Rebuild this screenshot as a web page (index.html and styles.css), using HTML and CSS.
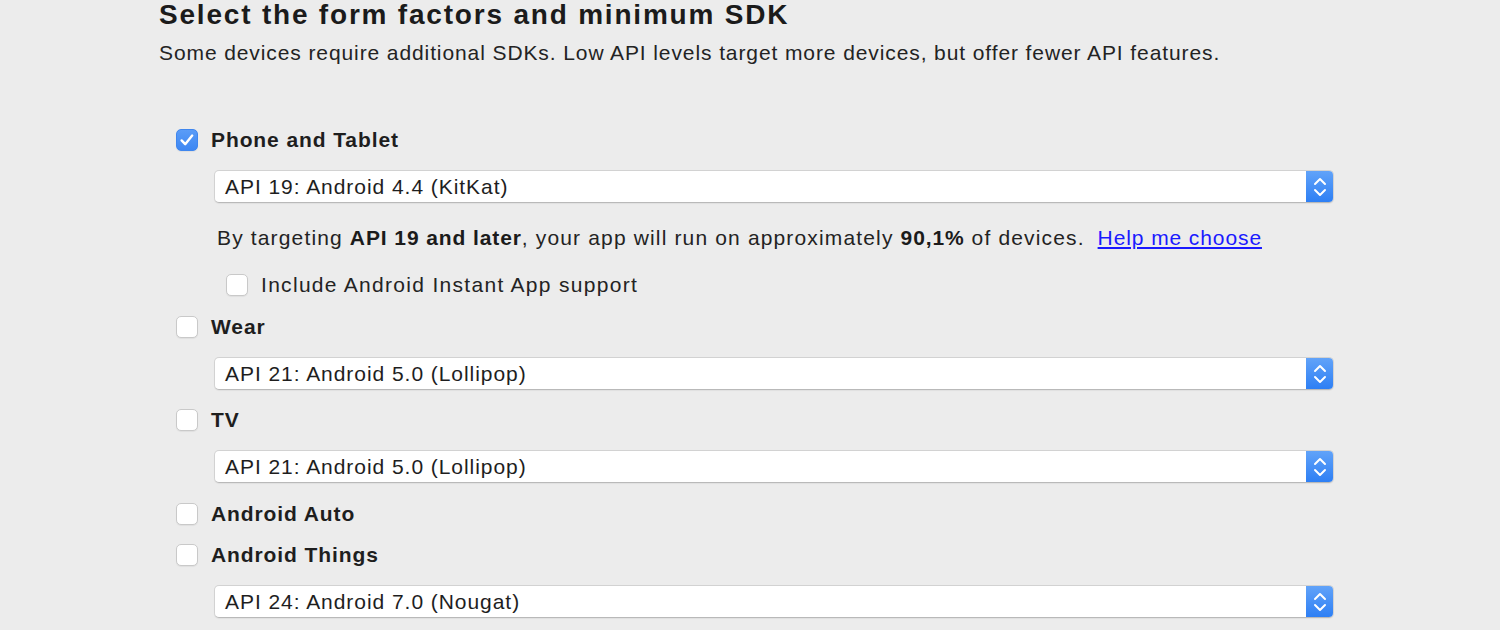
FILE: index.html
```html
<!DOCTYPE html>
<html>
<head>
<meta charset="utf-8">
<link rel="stylesheet" href="styles.css">
</head>
<body>
<div class="page">
  <h1 class="title">Select the form factors and minimum SDK</h1>
  <p class="subtitle">Some devices require additional SDKs. Low API levels target more devices, but offer fewer API features.</p>

  <div class="options">
    <label class="row row-phone">
      <span class="cb checked"><svg viewBox="0 0 20 20" width="20" height="20"><path d="M4.6 10.4l3.6 3.8L15.2 5.6" fill="none" stroke="#fff" stroke-width="2.4" stroke-linecap="round" stroke-linejoin="round"/></svg></span>
      <span class="label">Phone and Tablet</span>
    </label>
    <div class="select sel-phone">
      <span class="sel-text">API 19: Android 4.4 (KitKat)</span>
      <span class="sel-btn"><svg viewBox="0 0 28 33" width="28" height="33"><path d="M9 14l5-5 5 5M9 20l5 5 5-5" fill="none" stroke="#fff" stroke-width="2" stroke-linecap="round" stroke-linejoin="round"/></svg></span>
    </div>
    <div class="info">By targeting <b>API 19 and later</b>, your app will run on approximately <b>90,1%</b> of devices. <a class="help" href="#">Help me choose</a></div>
    <label class="row row-instant">
      <span class="cb"></span>
      <span class="label-normal">Include Android Instant App support</span>
    </label>

    <label class="row row-wear">
      <span class="cb"></span>
      <span class="label">Wear</span>
    </label>
    <div class="select sel-gap">
      <span class="sel-text">API 21: Android 5.0 (Lollipop)</span>
      <span class="sel-btn"><svg viewBox="0 0 28 33" width="28" height="33"><path d="M9 14l5-5 5 5M9 20l5 5 5-5" fill="none" stroke="#fff" stroke-width="2" stroke-linecap="round" stroke-linejoin="round"/></svg></span>
    </div>

    <label class="row row-tv">
      <span class="cb"></span>
      <span class="label">TV</span>
    </label>
    <div class="select sel-gap">
      <span class="sel-text">API 21: Android 5.0 (Lollipop)</span>
      <span class="sel-btn"><svg viewBox="0 0 28 33" width="28" height="33"><path d="M9 14l5-5 5 5M9 20l5 5 5-5" fill="none" stroke="#fff" stroke-width="2" stroke-linecap="round" stroke-linejoin="round"/></svg></span>
    </div>

    <label class="row row-auto">
      <span class="cb"></span>
      <span class="label">Android Auto</span>
    </label>
    <label class="row row-things">
      <span class="cb"></span>
      <span class="label">Android Things</span>
    </label>
    <div class="select sel-gap">
      <span class="sel-text">API 24: Android 7.0 (Nougat)</span>
      <span class="sel-btn"><svg viewBox="0 0 28 33" width="28" height="33"><path d="M9 14l5-5 5 5M9 20l5 5 5-5" fill="none" stroke="#fff" stroke-width="2" stroke-linecap="round" stroke-linejoin="round"/></svg></span>
    </div>
  </div>
</div>
</body>
</html>
```

FILE: styles.css
```css
html, body {
  margin: 0;
  padding: 0;
  background: #ececec;
  height: 100%;
  overflow: hidden;
}
body {
  font-family: "Liberation Sans", Arial, sans-serif;
  color: #1e1e1e;
}
.page {
  padding-left: 159px;
}
.title {
  margin: 0;
  font-size: 28px;
  line-height: 30px;
  font-weight: bold;
  letter-spacing: 1.8px;
  color: #1b1b1b;
}
.subtitle {
  margin: 11px 0 0 0;
  font-size: 21px;
  line-height: 24px;
  letter-spacing: 0.9px;
  color: #232323;
}
.options {
  display: flex;
  flex-direction: column;
  align-items: flex-start;
  margin-top: 60px;
}
.row {
  display: flex;
  align-items: center;
  height: 30px;
  padding-left: 17px;
}
.cb {
  width: 22px;
  height: 22px;
  box-sizing: border-box;
  border-radius: 5px;
  background: #fff;
  border: 1px solid #c9c9c9;
  box-shadow: 0 1px 1px rgba(0,0,0,0.06);
  flex: none;
  display: flex;
}
.cb.checked {
  background: linear-gradient(#5a9cf7, #3d87f3);
  border-color: #3f86ee;
}
.label {
  margin-left: 13px;
  font-size: 21px;
  font-weight: bold;
  letter-spacing: 0.9px;
  color: #1e1e1e;
}
.label-normal {
  margin-left: 13px;
  font-size: 21px;
  letter-spacing: 1.3px;
  color: #232323;
}
.select {
  margin-left: 55px;
  width: 1120px;
  height: 33px;
  box-sizing: border-box;
  display: flex;
  align-items: center;
  background: #fff;
  border: 1px solid #d2d2d2;
  border-bottom-color: #b9b9b9;
  border-radius: 5px;
  overflow: hidden;
  box-shadow: 0 1px 1px rgba(0,0,0,0.05);
}
.sel-phone { margin-top: 15px; }
.sel-gap { margin-top: 15px; }
.sel-text {
  flex: 1;
  padding-left: 10px;
  font-size: 21px;
  letter-spacing: 0.95px;
  color: #1e1e1e;
}
.sel-btn {
  width: 28px;
  height: 33px;
  flex: none;
  background: linear-gradient(#63a4f9, #2c7ef4);
  display: flex;
  margin-right: -1px;
}
.info {
  margin-top: 23px;
  padding-left: 58px;
  font-size: 21px;
  line-height: 24px;
  letter-spacing: 1.15px;
  color: #232323;
}
.info b {
  color: #1b1b1b;
  letter-spacing: 0.9px;
}
.help {
  margin-left: 6px;
  color: #1a1aff;
  letter-spacing: 0.9px;
  text-decoration: underline;
}
.row-instant { margin-top: 20px; padding-left: 67px; }
.row-wear { margin-top: 12px; }
.row-tv { margin-top: 15px; }
.row-auto { margin-top: 16px; }
.row-things { margin-top: 11px; }
```
